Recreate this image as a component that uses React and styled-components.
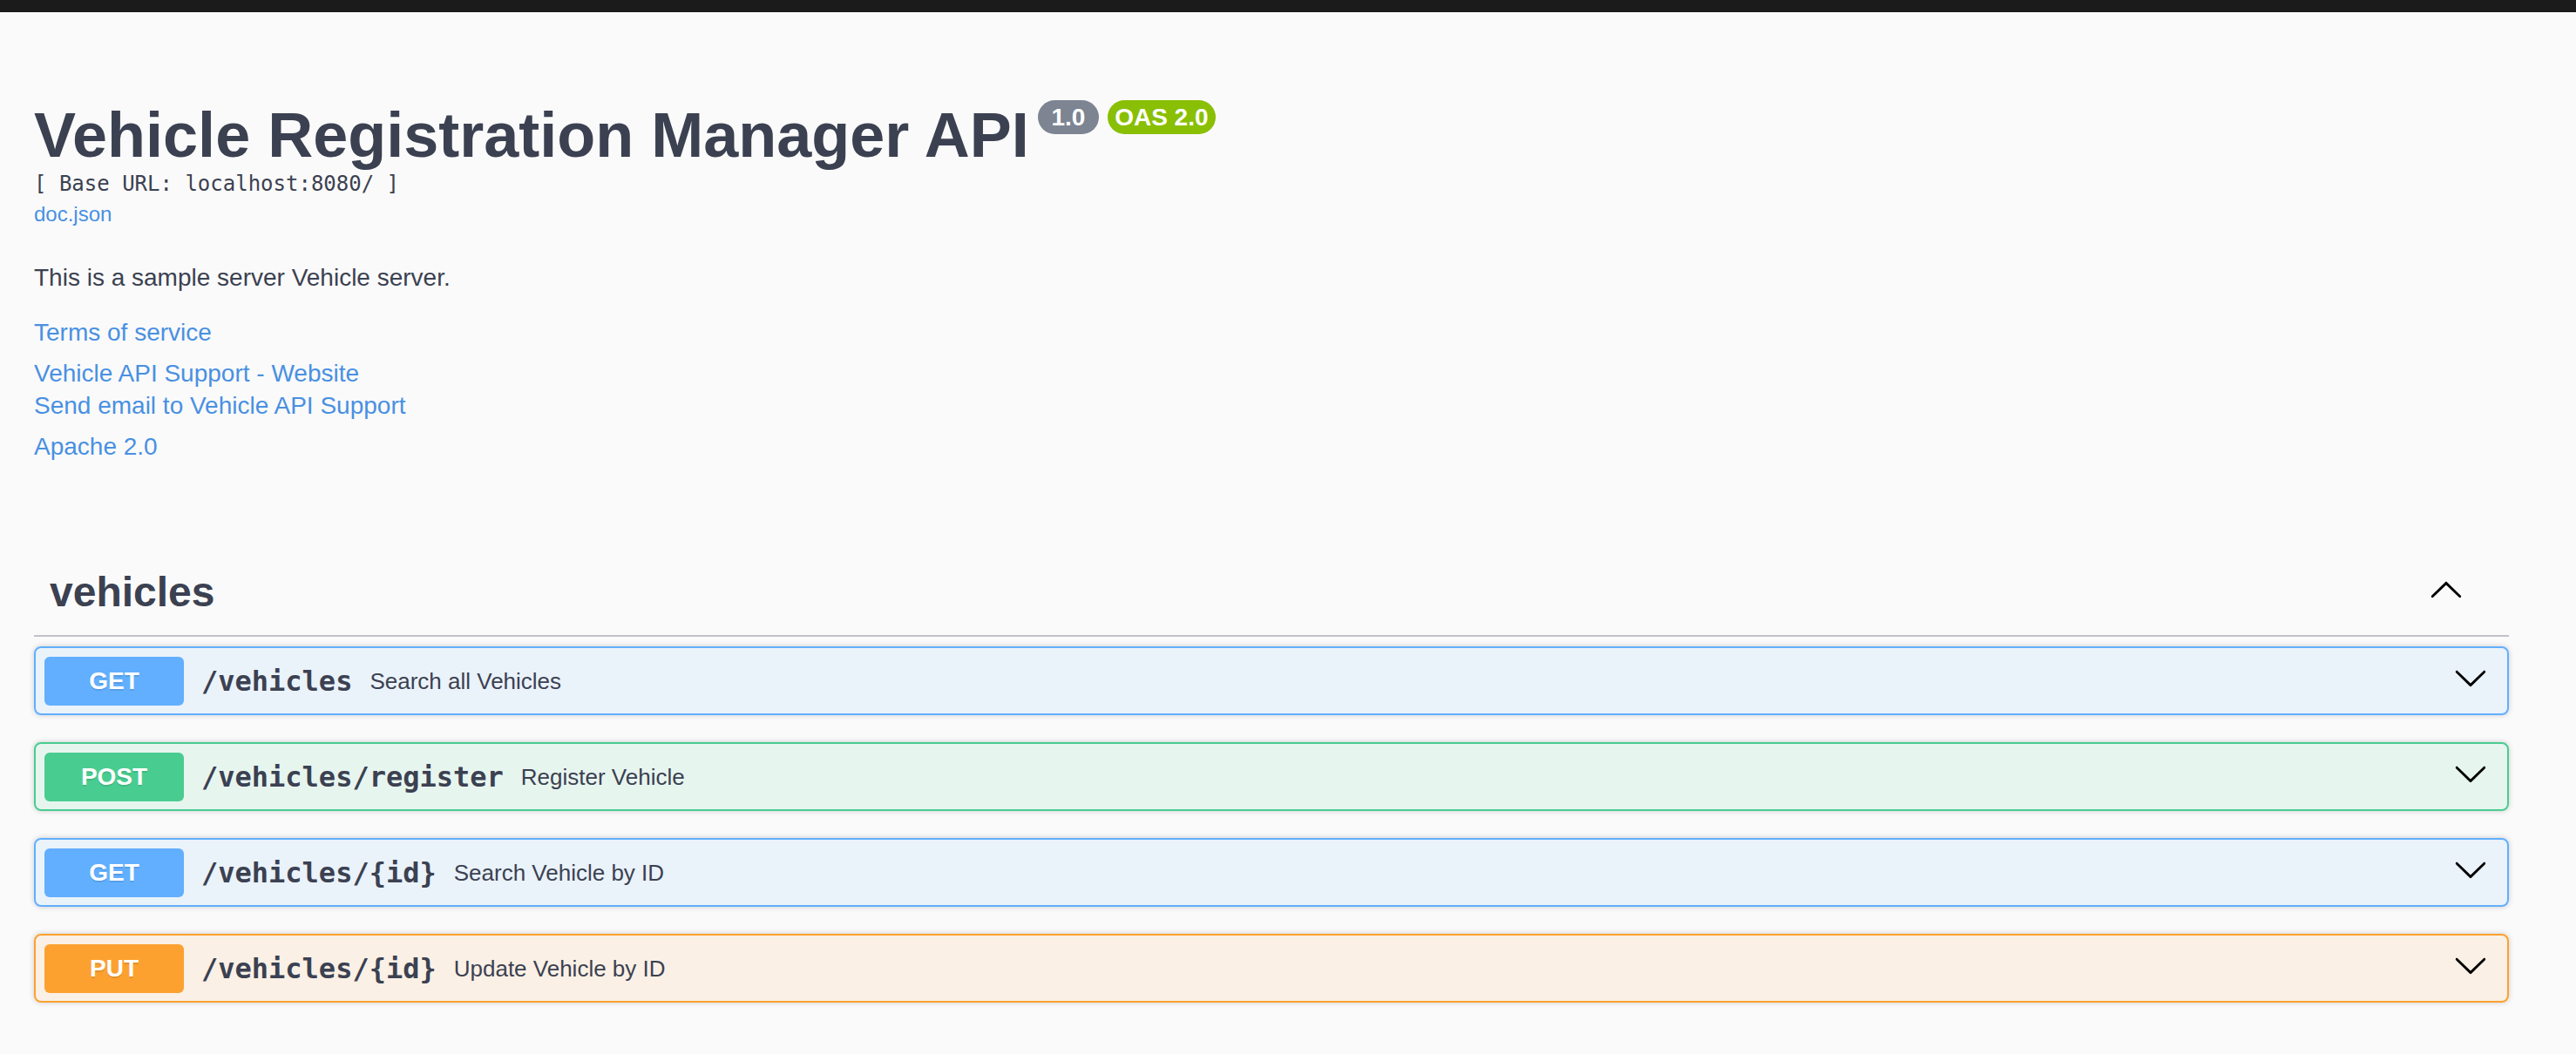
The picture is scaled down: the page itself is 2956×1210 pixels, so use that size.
import React from "react";
import styled, { createGlobalStyle } from "styled-components";

const GlobalStyle = createGlobalStyle`
  html, body {
    margin: 0;
    padding: 0;
    background: #fafafa;
  }
  body {
    font-family: "Liberation Sans", Arial, sans-serif;
    color: #3b4151;
  }
  * { box-sizing: border-box; }
`;

const TopBar = styled.div`
  height: 14px;
  background: #1b1b1b;
`;

const Wrapper = styled.div`
  margin-left: 39px;
  width: 2840px;
`;

const Info = styled.div`
  margin: 100px 0;
`;

const HGroup = styled.hgroup`
  display: block;
  margin: 0 0 40px;
`;

const TitleRow = styled.div`
  display: flex;
  align-items: flex-start;
`;

const Title = styled.h2`
  margin: 0;
  font-size: 72px;
  line-height: 83px;
  font-weight: 700;
  color: #3b4151;
`;

const Badges = styled.div`
  display: flex;
  gap: 10px;
  margin: 1px 0 0 10px;
`;

const Badge = styled.pre`
  margin: 0;
  background: ${(p) => p.$color};
  border-radius: 57px;
  padding: 4px 8px;
  color: #fff;
  font-family: "Liberation Sans", Arial, sans-serif;
  font-size: 28px;
  line-height: 31px;
  font-weight: 700;
  white-space: pre;
`;

const BaseUrl = styled.pre`
  margin: 0;
  font-family: "DejaVu Sans Mono", "Liberation Mono", monospace;
  font-size: 24px;
  line-height: 28px;
  font-weight: 400;
  color: #3b4151;
`;

const DocLink = styled.a`
  display: block;
  margin-top: 7px;
  font-size: 24px;
  line-height: 28px;
  color: #4990e2;
  text-decoration: none;
`;

const Description = styled.p`
  margin: 0 0 26px;
  font-size: 28px;
  line-height: 37px;
  color: #3b4151;
`;

const LinkGroup = styled.div`
  margin-bottom: 10px;
  &:last-child { margin-bottom: 0; }
`;

const InfoLink = styled.a`
  display: block;
  font-size: 28px;
  line-height: 37px;
  color: #4990e2;
  text-decoration: none;
`;

const TagHeader = styled.div`
  display: flex;
  align-items: center;
  padding: 20px 40px 20px 18px;
  border-bottom: 2px solid rgba(59, 65, 81, 0.3);
  margin-bottom: 11px;
`;

const TagTitle = styled.h3`
  flex: 1;
  margin: 0;
  font-size: 48px;
  line-height: 58px;
  font-weight: 700;
  color: #3b4151;
`;

const methodColors = {
  GET: { main: "#61affe", bg: "rgba(97, 175, 254, 0.1)" },
  POST: { main: "#49cc90", bg: "rgba(73, 204, 144, 0.1)" },
  PUT: { main: "#fca130", bg: "rgba(252, 161, 48, 0.1)" },
};

const OpBlock = styled.div`
  border: 2px solid ${(p) => methodColors[p.$method].main};
  background: ${(p) => methodColors[p.$method].bg};
  border-radius: 8px;
  box-shadow: 0 0 6px rgba(0, 0, 0, 0.19);
  margin-bottom: 31px;
`;

const Summary = styled.div`
  display: flex;
  align-items: center;
  padding: 10px 10px 9px;
`;

const Method = styled.span`
  min-width: 160px;
  padding: 12px 0;
  border-radius: 6px;
  background: ${(p) => methodColors[p.$method].main};
  color: #fff;
  font-size: 28px;
  line-height: 32px;
  font-weight: 700;
  text-align: center;
  text-shadow: 0 2px 0 rgba(0, 0, 0, 0.1);
`;

const Path = styled.span`
  padding: 0 20px;
  font-family: "DejaVu Sans Mono", "Liberation Mono", monospace;
  font-size: 32px;
  font-weight: 700;
  color: #3b4151;
`;

const SummaryText = styled.span`
  flex: 1;
  font-size: 26px;
  color: #3b4151;
`;

const ArrowSvg = styled.svg`
  width: 40px;
  height: 40px;
  flex: none;
  margin-right: 12px;
  margin-bottom: ${(p) => (p.$up ? "4px" : "9px")};
  transform: ${(p) => (p.$up ? "rotate(180deg)" : "none")};
`;

const Arrow = ({ up }) => (
  <ArrowSvg $up={up} viewBox="0 0 20 20" aria-hidden="true">
    <path
      fill="#000"
      d="M17.418 6.109c.272-.268.709-.268.979 0s.271.701 0 .969l-7.908 7.83c-.27.268-.707.268-.979 0l-7.908-7.83c-.27-.268-.27-.701 0-.969.271-.268.709-.268.979 0L10 13.25l7.418-7.141z"
    />
  </ArrowSvg>
);

const ops = [
  { method: "GET", path: "/vehicles", summary: "Search all Vehicles" },
  { method: "POST", path: "/vehicles/register", summary: "Register Vehicle" },
  { method: "GET", path: "/vehicles/{id}", summary: "Search Vehicle by ID" },
  { method: "PUT", path: "/vehicles/{id}", summary: "Update Vehicle by ID" },
];

export default function App() {
  return (
    <>
      <GlobalStyle />
      <TopBar />
      <Wrapper>
        <Info>
          <HGroup>
            <TitleRow>
              <Title>Vehicle Registration Manager API</Title>
              <Badges>
                <Badge $color="#7d8492">{" 1.0 "}</Badge>
                <Badge $color="#89bf04">OAS 2.0</Badge>
              </Badges>
            </TitleRow>
            <BaseUrl>[ Base URL: localhost:8080/ ]</BaseUrl>
            <DocLink href="#">doc.json</DocLink>
          </HGroup>
          <Description>This is a sample server Vehicle server.</Description>
          <LinkGroup>
            <InfoLink href="#">Terms of service</InfoLink>
          </LinkGroup>
          <LinkGroup>
            <InfoLink href="#">Vehicle API Support - Website</InfoLink>
            <InfoLink href="#">Send email to Vehicle API Support</InfoLink>
          </LinkGroup>
          <LinkGroup>
            <InfoLink href="#">Apache 2.0</InfoLink>
          </LinkGroup>
        </Info>
        <TagHeader>
          <TagTitle>vehicles</TagTitle>
          <Arrow up />
        </TagHeader>
        {ops.map((op, i) => (
          <OpBlock key={i} $method={op.method}>
            <Summary>
              <Method $method={op.method}>{op.method}</Method>
              <Path>{op.path}</Path>
              <SummaryText>{op.summary}</SummaryText>
              <Arrow />
            </Summary>
          </OpBlock>
        ))}
      </Wrapper>
    </>
  );
}
